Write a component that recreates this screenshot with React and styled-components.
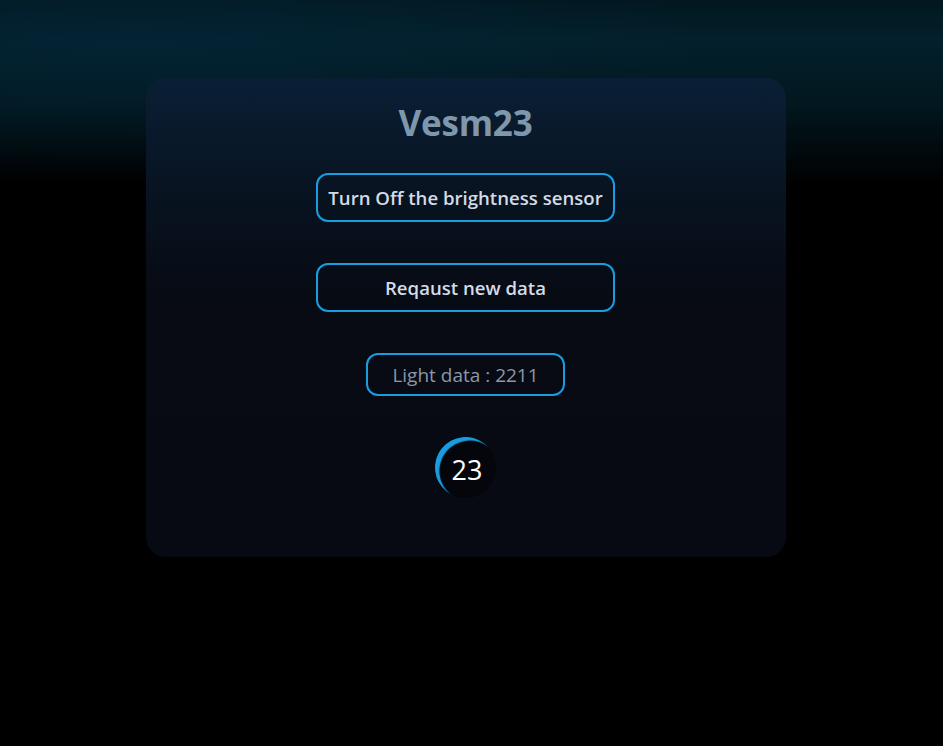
import React, { useState } from 'react'
import styled, { createGlobalStyle } from 'styled-components'

const GlobalStyle = createGlobalStyle`
    html, body {
        margin: 0;
        padding: 0;
        background: #000;
    }
    body {
        font-family: "Segoe UI", "Open Sans", "Noto Sans", sans-serif;
    }
`

const Page = styled.div`
    box-sizing: border-box;
    min-height: 746px;
    background:
        radial-gradient(ellipse 60% 130px at 15% 40px, rgba(4, 38, 58, 0.55), rgba(0, 0, 0, 0) 100%),
        linear-gradient(to bottom, #02171f 0px, #03202c 40px, #021820 100px, #000 185px, #000 100%);
    padding: 78px 12px 0 0;
    display: flex;
    justify-content: center;
    align-items: flex-start;
`

const Card = styled.div`
    width: 640px;
    height: 479px;
    box-sizing: border-box;
    border-radius: 20px;
    background: linear-gradient(to bottom, #0a1f35 0%, #081422 22%, #070b14 45%, #070a12 100%);
    display: flex;
    flex-direction: column;
    align-items: center;
    padding-top: 20px;
`

const Title = styled.h1`
    margin: 0;
    font-size: 35px;
    font-weight: 700;
    color: #7e97ac;
    line-height: 50px;
    letter-spacing: -0.2px;
`

const Button = styled.button`
    box-sizing: border-box;
    width: 299px;
    height: 49px;
    margin-top: ${p => p.$top}px;
    background: transparent;
    border: 2px solid #1a9ddf;
    border-radius: 12px;
    color: #d3dbe6;
    font-family: inherit;
    font-size: 18.6px;
    font-weight: 600;
    cursor: pointer;
    padding: 0;
`

const DataBox = styled.div`
    margin-top: 41px;
    width: 199px;
    height: 43px;
    box-sizing: border-box;
    border: 2px solid #1a9ddf;
    border-radius: 12px;
    color: #8c98a8;
    font-size: 19px;
    display: flex;
    align-items: center;
    justify-content: center;
`

const Loader = styled.div`
    margin-top: 41px;
    position: relative;
    width: 61px;
    height: 61px;
    display: flex;
    align-items: center;
    justify-content: center;
`

const Ring = styled.div`
    position: absolute;
    inset: 0;
    border-radius: 50%;
    background: #04060c;
    box-shadow: inset 4px 4px 1px 0 #1a9ddf;
    transform: rotate(-6deg);
`

const Count = styled.span`
    position: relative;
    color: #fff;
    font-size: 27px;
    line-height: 1;
    margin: 4px 0 0 3px;
`

export default function App() {
    const [sensorOn, setSensorOn] = useState(true)
    const [light] = useState(2211)

    return (
        <>
            <GlobalStyle />
            <Page>
                <Card>
                    <Title>Vesm23</Title>
                    <Button $top={25} onClick={() => setSensorOn(!sensorOn)}>
                        {sensorOn ? 'Turn Off the brightness sensor' : 'Turn On the brightness sensor'}
                    </Button>
                    <Button $top={41}>Reqaust new data</Button>
                    <DataBox>Light data : {light}</DataBox>
                    <Loader>
                        <Ring />
                        <Count>23</Count>
                    </Loader>
                </Card>
            </Page>
        </>
    )
}
